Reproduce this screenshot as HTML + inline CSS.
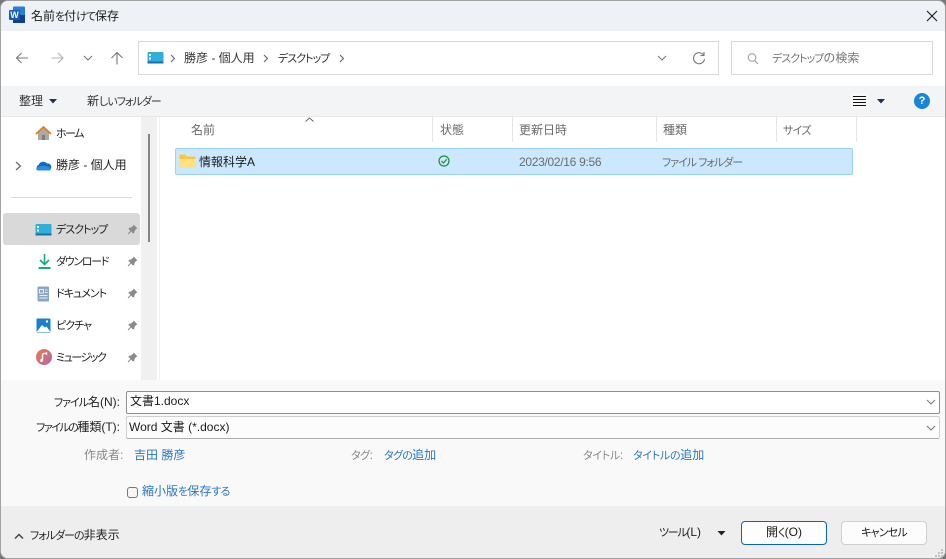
<!DOCTYPE html>
<html lang="ja"><head><meta charset="utf-8"><style>
html,body{margin:0;padding:0;width:946px;height:559px;overflow:hidden;background:#777}
#w{position:absolute;left:0;top:0;width:944px;height:557px;border:1px solid #a3a3a3;border-radius:8px;overflow:hidden;background:#fff}
.a{position:absolute}
.t{position:absolute;white-space:nowrap;font:12px/16px "Liberation Sans","Noto Sans CJK JP",sans-serif;color:#1c1c1c}
i{font-style:normal;font-size:11px;font-feature-settings:"palt";letter-spacing:-1px}
.g{color:#6b6b6b}.l{color:#2a77c4}
svg{position:absolute;overflow:visible}
.box{position:absolute;box-sizing:border-box;border:1px solid #d9d9d9;background:#fff}
.sep{position:absolute;top:116px;width:1px;height:25px;background:#e5e5e5}
</style></head><body>
<div id="w">
<div class="a" style="left:0;top:0;width:944px;height:30px;background:#eef2f6"></div>
<div class="a" style="left:0;top:85px;width:944px;height:30px;background:#f3f4f6"></div>
<div class="a" style="left:0;top:115px;width:944px;height:1px;background:#e8e8e8"></div>
<div class="a" style="left:140px;top:116px;width:16px;height:263px;background:#f0f0f0"></div>
<div class="a" style="left:158px;top:116px;width:1px;height:263px;background:#f2f2f2"></div>
<div class="a" style="left:147px;top:133px;width:2px;height:108px;background:#858585"></div>
<div class="a" style="left:0;top:379px;width:944px;height:126px;background:#f9f9f9"></div>
<div class="a" style="left:0;top:505px;width:944px;height:52px;background:#eeeeee"></div>

<!-- title -->
<svg style="left:8px;top:5px" width="17" height="18"><rect x="4" y="0.500" width="12" height="16.500" rx="1" fill="#2b7cd3"/><rect x="4" y="9" width="12" height="8" fill="#103f91"/><rect x="0" y="4" width="11" height="10" rx="1" fill="#185abd"/></svg>
<div class="t" style="left:8px;top:9px;width:11px;height:10px;font:bold 9px/10px 'Liberation Sans',sans-serif;color:#fff;text-align:center">W</div>
<div class="t" style="left:30px;top:7px">名前<i>を</i>付<i>けて</i>保存</div>
<svg style="left:924px;top:8px" width="14" height="14"><path d="M2 2L12 12M12 2L2 12" stroke="#1a1a1a" stroke-width="1.100" fill="none"/></svg>

<!-- nav -->
<svg style="left:14px;top:51px" width="16" height="14"><path d="M1.500 6H13M6.500 1L1.500 6L6.500 11" stroke="#777" stroke-width="1.100" fill="none"/></svg>
<svg style="left:49px;top:51px" width="16" height="14"><path d="M1.500 6H13M8 1L13 6L8 11" stroke="#b0b0b0" stroke-width="1.100" fill="none"/></svg>
<svg style="left:81px;top:53px" width="12" height="8"><path d="M2 2L6 6L10 2" stroke="#777" stroke-width="1.100" fill="none"/></svg>
<svg style="left:109px;top:49px" width="14" height="16"><path d="M7 14.500V2.500M1.500 8L7 2.500L12.500 8" stroke="#777" stroke-width="1.100" fill="none"/></svg>
<div class="box" style="left:137px;top:40px;width:581px;height:34px"></div>
<svg style="left:146px;top:50px" width="17" height="13"><rect x="0.500" y="1" width="16" height="11.500" rx="1" fill="#2fb0d9"/><rect x="0.500" y="10.500" width="16" height="2" fill="#1a6fa8"/><rect x="2" y="3" width="2" height="2" fill="#fff"/><rect x="2" y="6.500" width="2" height="2" fill="#fff"/></svg>
<svg style="left:169px;top:53px" width="6" height="9"><path d="M1 1L4.500 4.500L1 8" stroke="#666" stroke-width="1.100" fill="none"/></svg>
<div class="t" style="left:183px;top:49px;color:#333">勝彦 - 個人用</div>
<svg style="left:262px;top:53px" width="6" height="9"><path d="M1 1L4.500 4.500L1 8" stroke="#666" stroke-width="1.100" fill="none"/></svg>
<div class="t" style="left:277px;top:49px;color:#333"><i>デスクトップ</i></div>
<svg style="left:338px;top:53px" width="6" height="9"><path d="M1 1L4.500 4.500L1 8" stroke="#666" stroke-width="1.100" fill="none"/></svg>
<svg style="left:656px;top:54px" width="10" height="7"><path d="M1 1L5 5L9 1" stroke="#777" stroke-width="1" fill="none"/></svg>
<svg style="left:691px;top:50px" width="14" height="14"><path d="M11.500 4A5.500 5.500 0 1 0 12.500 8M12 1V4.500H8.500" stroke="#777" stroke-width="1.100" fill="none"/></svg>
<div class="box" style="left:730px;top:40px;width:202px;height:34px"></div>
<svg style="left:745px;top:51px" width="13" height="13"><circle cx="6" cy="5.500" r="3.800" stroke="#999" fill="none"/><path d="M8.800 8.500L12 12" stroke="#999" fill="none"/></svg>
<div class="t g" style="left:771px;top:49px;color:#777"><i>デスクトップ</i>の検索</div>

<!-- toolbar -->
<div class="t" style="left:18px;top:92px;color:#333">整理</div>
<svg style="left:48px;top:98px" width="8" height="5"><path d="M0 0H8L4 4.500Z" fill="#1f3350"/></svg>
<div class="t" style="left:86px;top:92px;color:#333">新<i>しいフォルダー</i></div>
<div class="a" style="left:850px;top:92px;width:17px;height:16px;background:#f8f8f8"></div>
<div class="a" style="left:852px;top:95px;width:13px;height:1px;background:#111;box-shadow:0 3px 0 #111,0 6px 0 #111,0 9px 0 #111"></div>
<svg style="left:876px;top:98px" width="9" height="5"><path d="M0 0H8L4 4.500Z" fill="#1f3350"/></svg>
<svg style="left:913px;top:92px" width="16" height="16"><circle cx="8" cy="8" r="8" fill="#1a85d6"/></svg>
<div class="t" style="left:913px;top:92px;width:16px;text-align:center;font:bold 11px/16px 'Liberation Sans',sans-serif;color:#fff">?</div>

<!-- sidebar -->
<svg style="left:34px;top:124px" width="17" height="17"><path d="M3 8V15H14V8L8.500 3Z" fill="#a9a9a9"/><path d="M1 9L8.500 2L16 9" stroke="#e07b1a" stroke-width="1.700" fill="none"/><rect x="7" y="10" width="3" height="5" fill="#7e7e7e"/></svg>
<div class="t" style="left:55px;top:124px;color:#222"><i style="letter-spacing:-1.500px">ホーム</i></div>
<svg style="left:14px;top:160px" width="7" height="10"><path d="M1 1L5.500 5L1 9" stroke="#666" stroke-width="1.200" fill="none"/></svg>
<svg style="left:34px;top:158px" width="17" height="12"><path d="M3.500 11.500A3 3 0 0 1 3.500 6A5 5 0 0 1 12 4.500A3.500 3.500 0 0 1 13.500 11.500Z" fill="#0f6cc4"/><path d="M1 10C4 6 10 6 16 9C16 11 15 11.500 13.500 11.500H3.500C2 11.500 1.500 11 1 10Z" fill="#2a8fe0"/></svg>
<div class="t" style="left:55px;top:156px;color:#222">勝彦 - 個人用</div>
<div class="a" style="left:10px;top:196px;width:121px;height:1px;background:#d9d9d9"></div>
<div class="a" style="left:2px;top:212px;width:137px;height:32px;background:#d9d9d9;border-radius:3px"></div>
<svg style="left:34px;top:222px" width="17" height="13"><rect x="0.500" y="1" width="16" height="11.500" rx="1" fill="#2fb0d9"/><rect x="0.500" y="10.500" width="16" height="2" fill="#1a6fa8"/><rect x="2" y="3" width="2" height="2" fill="#fff"/><rect x="2" y="6.500" width="2" height="2" fill="#fff"/></svg>
<div class="t" style="left:55px;top:220px;color:#222"><i>デスクトップ</i></div>
<svg style="left:37px;top:252px" width="13" height="17"><path d="M6.500 1V11M2 7L6.500 11.500L11 7" stroke="#19a982" stroke-width="1.600" fill="none"/><rect x="0.500" y="14" width="12" height="2" fill="#19a982"/></svg>
<div class="t" style="left:55px;top:252px;color:#222"><i style="letter-spacing:-1.300px">ダウンロード</i></div>
<svg style="left:36px;top:285px" width="13" height="16"><rect x="0.500" y="0.500" width="11.500" height="15" rx="1" fill="#8ba5c4"/><path d="M2.500 3.500H6.500V7H2.500ZM8 4H10.500M8 6.500H10.500M2.500 9.500H10.500M2.500 12H10.500" stroke="#e8eef5" fill="none"/></svg>
<div class="t" style="left:55px;top:284px;color:#222"><i>ドキュメント</i></div>
<svg style="left:35px;top:317px" width="15" height="15"><rect x="0.500" y="0.500" width="14" height="14" rx="1" fill="#1b7fd0"/><path d="M0.500 14L6 7L9 9.500L10.500 8.500L14.500 14Z" fill="#fff"/><circle cx="11" cy="3.500" r="1.200" fill="#fff"/></svg>
<div class="t" style="left:55px;top:316px;color:#222"><i>ピクチャ</i></div>
<svg style="left:35px;top:348px" width="16" height="16"><defs><linearGradient id="m" x1="0" y1="0" x2="1" y2="1"><stop offset="0" stop-color="#ea7e45"/><stop offset="1" stop-color="#b564b0"/></linearGradient></defs><circle cx="8" cy="8" r="8" fill="url(#m)"/><path d="M6.500 11.500V5L10.500 4V6" stroke="#fff" stroke-width="1.400" fill="none"/><circle cx="5.500" cy="11.500" r="1.500" fill="#fff"/></svg>
<div class="t" style="left:55px;top:348px;color:#222"><i style="letter-spacing:-1.500px">ミュージック</i></div>
<svg style="left:126px;top:223px" width="11" height="11"><path d="M6.500 0.500L10.500 4.500L9 5L7 8L7.500 9L6 9.500L1.500 5L2 3.500L3 4L6 2Z" fill="#8b8b8b"/><path d="M4 7L1 10" stroke="#8b8b8b"/></svg>
<svg style="left:126px;top:255px" width="11" height="11"><path d="M6.500 0.500L10.500 4.500L9 5L7 8L7.500 9L6 9.500L1.500 5L2 3.500L3 4L6 2Z" fill="#8b8b8b"/><path d="M4 7L1 10" stroke="#8b8b8b"/></svg>
<svg style="left:126px;top:287px" width="11" height="11"><path d="M6.500 0.500L10.500 4.500L9 5L7 8L7.500 9L6 9.500L1.500 5L2 3.500L3 4L6 2Z" fill="#8b8b8b"/><path d="M4 7L1 10" stroke="#8b8b8b"/></svg>
<svg style="left:126px;top:319px" width="11" height="11"><path d="M6.500 0.500L10.500 4.500L9 5L7 8L7.500 9L6 9.500L1.500 5L2 3.500L3 4L6 2Z" fill="#8b8b8b"/><path d="M4 7L1 10" stroke="#8b8b8b"/></svg>
<svg style="left:126px;top:351px" width="11" height="11"><path d="M6.500 0.500L10.500 4.500L9 5L7 8L7.500 9L6 9.500L1.500 5L2 3.500L3 4L6 2Z" fill="#8b8b8b"/><path d="M4 7L1 10" stroke="#8b8b8b"/></svg>

<!-- headers -->
<svg style="left:304px;top:116px" width="9" height="5"><path d="M0.500 4.500L4.500 1L8.500 4.500" stroke="#666" fill="none"/></svg>
<div class="t g" style="left:190px;top:121px">名前</div>
<div class="sep" style="left:431px"></div>
<div class="t g" style="left:439px;top:121px">状態</div>
<div class="sep" style="left:511px"></div>
<div class="t g" style="left:518px;top:121px">更新日時</div>
<div class="sep" style="left:655px"></div>
<div class="t g" style="left:662px;top:121px">種類</div>
<div class="sep" style="left:775px"></div>
<div class="t g" style="left:782px;top:121px"><i style="letter-spacing:-.7px">サイズ</i></div>
<div class="sep" style="left:855px"></div>

<!-- row -->
<div class="a" style="left:174px;top:147px;width:676px;height:25px;box-sizing:content-box;background:#cce8ff;border:1px solid #99d1ff;border-radius:2px"></div>
<svg style="left:178px;top:153px" width="17" height="14"><path d="M0.500 2C0.500 1 1 0.500 2 0.500H6L8 2.500H15C16 2.500 16.500 3 16.500 4V12C16.500 13 16 13.500 15 13.500H2C1 13.500 0.500 13 0.500 12Z" fill="#f9c63f"/><path d="M0.500 5H16.500V12C16.500 13 16 13.500 15 13.500H2C1 13.500 0.500 13 0.500 12Z" fill="#ffe082"/></svg>
<div class="t" style="left:198px;top:153px;color:#1a1a1a">情報科学A</div>
<svg style="left:437px;top:154px" width="12" height="12"><circle cx="6" cy="6" r="5" stroke="#1a8f3c" stroke-width="1.200" fill="none"/><path d="M3.500 6L5.400 8L8.700 4.300" stroke="#1a8f3c" stroke-width="1.200" fill="none"/></svg>
<div class="t g" style="left:518px;top:153px;letter-spacing:-.3px">2023/02/16 9:56</div>
<div class="t g" style="left:661px;top:153px"><i>ファイル フォルダー</i></div>

<!-- form -->
<div class="t" style="left:0;width:119px;text-align:right;top:393px;color:#222"><i>ファイル</i>名(N):</div>
<div class="a" style="left:125px;top:390px;width:812px;height:21px;background:#fff;border:1px solid #8f8f8f;border-radius:2px"></div>
<div class="t" style="left:129px;top:392px">文書1.docx</div>
<svg style="left:925px;top:398px" width="10" height="6"><path d="M1 1L5 5L9 1" stroke="#777" fill="none"/></svg>
<div class="t" style="left:0;width:119px;text-align:right;top:418px;color:#222"><i style="letter-spacing:-1.500px">ファイルの</i>種類(T):</div>
<div class="a" style="left:125px;top:415px;width:812px;height:21px;background:#fcfcfc;border:1px solid #d0d0d0;border-bottom-color:#adadad;border-radius:2px"></div>
<div class="t" style="left:128px;top:418px">Word 文書 (*.docx)</div>
<svg style="left:925px;top:424px" width="10" height="6"><path d="M1 1L5 5L9 1" stroke="#777" fill="none"/></svg>
<div class="t g" style="left:83px;top:446px;color:#888">作成者:</div>
<div class="t l" style="left:133px;top:446px">吉田 勝彦</div>
<div class="t g" style="left:350px;top:446px;color:#888"><i style="letter-spacing:-.5px">タグ</i>:</div>
<div class="t l" style="left:383px;top:446px"><i style="letter-spacing:-.7px">タグの</i>追加</div>
<div class="t g" style="left:582px;top:446px;color:#888"><i style="letter-spacing:-.3px">タイトル</i>:</div>
<div class="t l" style="left:632px;top:446px"><i style="letter-spacing:-.3px">タイトルの</i>追加</div>
<div class="a" style="left:126px;top:486px;width:9px;height:9px;border:1px solid #777;border-radius:3px;background:#f6f6f6"></div>
<div class="t l" style="left:141px;top:482px">縮小版<i style="letter-spacing:-.8px">を</i>保存<i style="letter-spacing:-.8px">する</i></div>

<!-- footer -->
<svg style="left:13px;top:532px" width="10" height="7"><path d="M1 5.500L5 1.500L9 5.500" stroke="#444" stroke-width="1.500" fill="none"/></svg>
<div class="t" style="left:29px;top:526px;color:#222"><i>フォルダーの</i>非表示</div>
<div class="t" style="left:658px;top:523px;color:#222"><i style="letter-spacing:-1.300px">ツール</i>(L)</div>
<svg style="left:716px;top:530px" width="9" height="5"><path d="M0.500 0H8.500L4.500 4.500Z" fill="#222"/></svg>
<div class="a" style="left:740px;top:520px;width:84px;height:22px;background:#fdfdfd;border:1px solid #0067c0;border-radius:4px"></div>
<div class="t" style="left:740px;top:523px;width:86px;text-align:center;color:#1a1a1a">開<i>く</i>(O)</div>
<div class="a" style="left:840px;top:520px;width:84px;height:22px;background:#fcfcfc;border:1px solid #cfcfcf;border-radius:4px"></div>
<div class="t" style="left:840px;top:523px;width:86px;text-align:center;color:#1a1a1a"><i style="letter-spacing:-.8px">キャンセル</i></div>
<svg style="left:933px;top:547px" width="10" height="10"><path d="M7 1h2v2h-2zM4 4h2v2h-2zM7 4h2v2h-2zM1 7h2v2h-2zM4 7h2v2h-2zM7 7h2v2h-2z" fill="#c2c2c2"/></svg>
</div>
</body></html>
